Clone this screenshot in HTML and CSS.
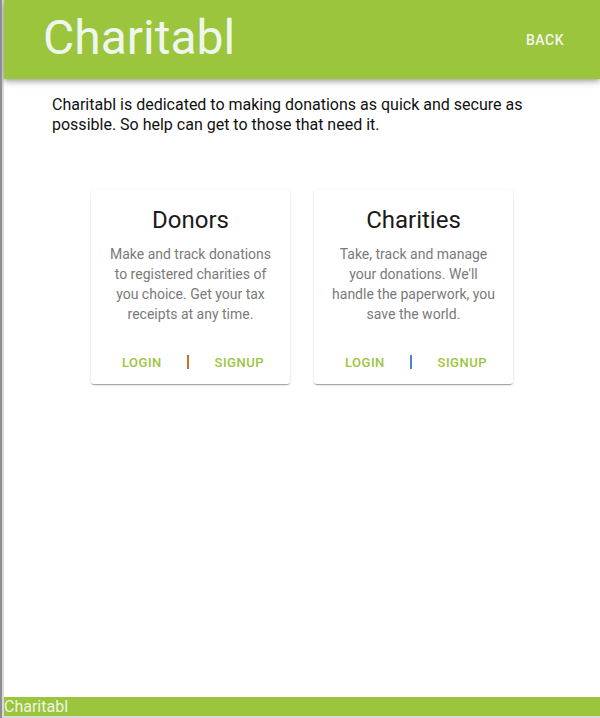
FILE: index.html
```html
<!DOCTYPE html>
<html lang="en">
<head>
<meta charset="utf-8">
<title>Charitabl</title>
<link rel="stylesheet" href="styles.css">
</head>
<body>
<div class="app">
  <header class="topbar">
    <h1 class="brand">Charitabl</h1>
    <a class="back" href="#">Back</a>
  </header>
  <main class="content">
    <p class="intro">Charitabl is dedicated to making donations as quick and secure as possible. So help can get to those that need it.</p>
    <div class="cards">
      <section class="card">
        <h2 class="card-title">Donors</h2>
        <p class="card-text">Make and track donations to registered charities of you choice. Get your tax receipts at any time.</p>
        <div class="card-actions">
          <a class="action" href="#">Login</a>
          <span class="divider divider-orange"></span>
          <a class="action" href="#">Signup</a>
        </div>
      </section>
      <section class="card">
        <h2 class="card-title">Charities</h2>
        <p class="card-text">Take, track and manage your donations. We'll handle the paperwork, you save the world.</p>
        <div class="card-actions">
          <a class="action" href="#">Login</a>
          <span class="divider divider-blue"></span>
          <a class="action" href="#">Signup</a>
        </div>
      </section>
    </div>
  </main>
  <footer class="footer">Charitabl</footer>
</div>
</body>
</html>
```

FILE: styles.css
```css
html, body {
  margin: 0;
  padding: 0;
}
body {
  height: 718px;
  background: #d9d9d9;
  border-left: 2px solid #8e8e8e;
  box-sizing: border-box;
  font-family: Roboto, "Liberation Sans", sans-serif;
  overflow: hidden;
}
.app {
  margin-left: 2px;
  height: 716px;
  background: #fff;
  display: flex;
  flex-direction: column;
}
.topbar {
  height: 79px;
  background: #9bc53d;
  display: flex;
  align-items: center;
  justify-content: space-between;
  padding: 0 36px 0 39px;
  box-shadow: 0 2px 4px -1px rgba(0,0,0,.2), 0 4px 5px 0 rgba(0,0,0,.14), 0 1px 10px 0 rgba(0,0,0,.12);
  position: relative;
  z-index: 1;
}
.brand {
  margin: 0 0 3px;
  font-weight: 400;
  font-size: 48px;
  color: #eef6ee;
  letter-spacing: 0;
  line-height: 1;
}
.back {
  color: #f3f7ee;
  text-decoration: none;
  text-transform: uppercase;
  font-weight: 500;
  font-size: 14px;
  letter-spacing: 0.5px;
}
.content {
  flex: 1;
  padding: 16px 48px 0 48px;
}
.intro {
  margin: 0;
  font-size: 16px;
  line-height: 20px;
  color: #111;
}
.cards {
  display: flex;
  justify-content: center;
  gap: 24px;
  margin-top: 55px;
}
.card {
  width: 199px;
  box-sizing: border-box;
  background: #fff;
  border-radius: 3px;
  box-shadow: 0 2px 1px -1px rgba(0,0,0,.2), 0 1px 1px 0 rgba(0,0,0,.14), 0 1px 3px 0 rgba(0,0,0,.12);
  padding: 15px 16px 14px;
  text-align: center;
}
.card-title {
  margin: 0;
  font-weight: 400;
  font-size: 24px;
  line-height: 30px;
  color: #1a1a1a;
}
.card-text {
  margin: 9px 0 0;
  font-size: 14px;
  line-height: 20px;
  color: #7a7a7a;
}
.card-actions {
  margin: 30px -16px 0;
  padding: 0 26px 0 31px;
  display: flex;
  justify-content: space-between;
  align-items: center;
  height: 16px;
}
.action {
  color: #9bc53d;
  text-decoration: none;
  text-transform: uppercase;
  font-weight: 500;
  font-size: 13px;
  letter-spacing: 0.5px;
}
.divider {
  width: 2px;
  height: 14px;
}
.divider-orange {
  background: #c8702c;
}
.divider-blue {
  background: #4a88c8;
}
.footer {
  height: 19px;
  background: #9bc53d;
  color: #eef4e4;
  font-size: 16px;
  line-height: 19px;
}
```
